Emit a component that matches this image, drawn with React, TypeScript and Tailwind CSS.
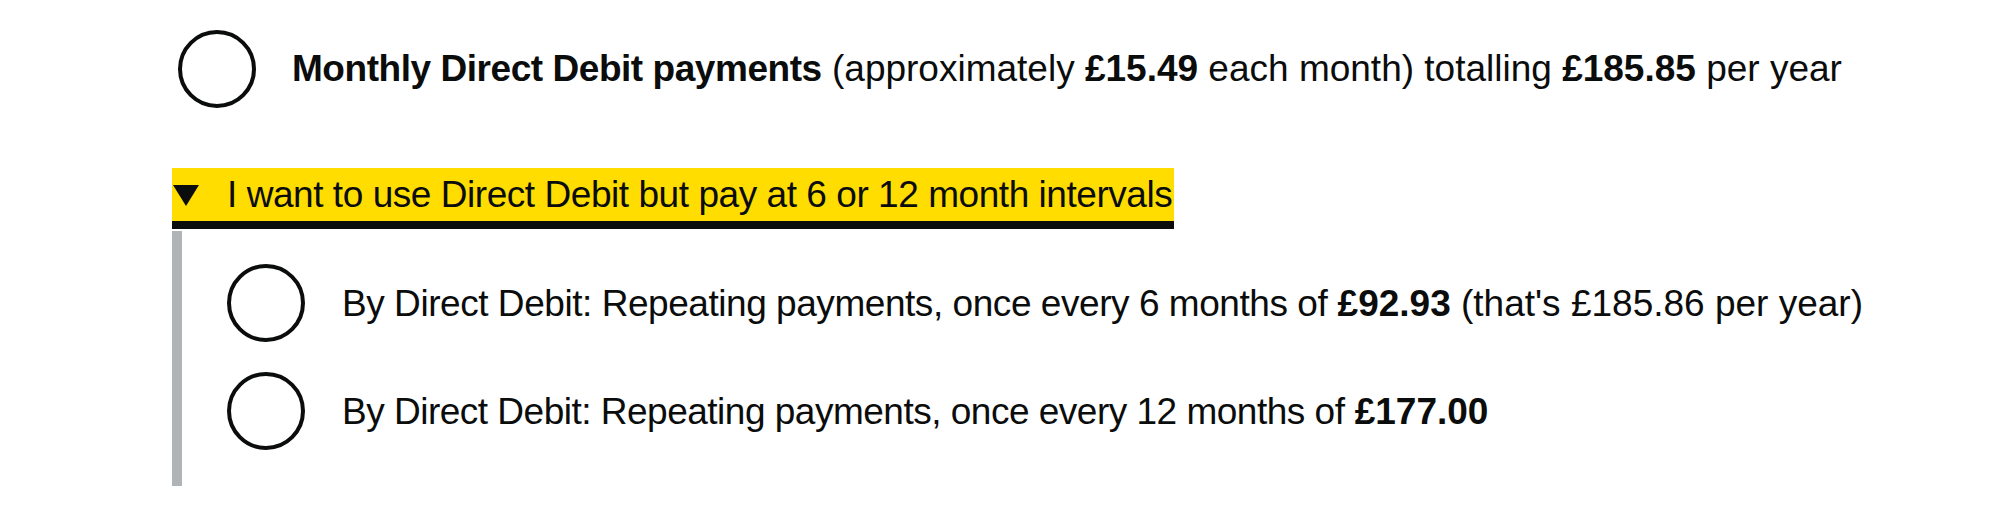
import React from "react";

function Radio() {
  return (
    <span className="block w-[78px] h-[78px] shrink-0 rounded-full border-[4px] border-[#0b0c0c] bg-white" />
  );
}

function Tight({ children }: { children: React.ReactNode }) {
  return <span className="tracking-[-0.45px]">{children}</span>;
}

export default function App() {
  return (
    <div
      className="w-full h-[531px] bg-white text-[#0b0c0c] pl-[172px] pt-[29px]"
      style={{ fontFamily: '"Liberation Sans", Arial, sans-serif' }}
    >
      {/* Monthly option */}
      <label className="flex items-center h-[79px] pl-[6px]">
        <Radio />
        <span className="ml-[36px] text-[37px] leading-[49px] whitespace-nowrap">
          <b className="tracking-[-0.45px]">Monthly Direct Debit payments</b> (approximately <b>£15.49</b> each
          month) totalling <b>£185.85</b> per year
        </span>
      </label>

      {/* Disclosure with the interval options */}
      <div className="mt-[60px]">
        <div className="inline-flex items-center h-[53px] bg-[#ffdd00] shadow-[0_8px_0_#0b0c0c] pr-[2px]">
          <svg width="26" height="21" viewBox="0 0 26 21" className="ml-[1px] mt-[2px]">
            <polygon points="0,0 26,0 13,21" fill="#0b0c0c" />
          </svg>
          <span className="ml-[28px] text-[37px] leading-[49px] whitespace-nowrap tracking-[-0.45px]">
            I want to use Direct Debit but pay at 6 or 12 month intervals
          </span>
        </div>
        <div className="mt-[10px] h-[255px] border-l-[10px] border-[#b1b4b6] pl-[45px] pt-[18px] flex flex-col">
          <label className="flex items-center h-[108px]">
            <Radio />
            <span className="ml-[37px] text-[37px] leading-[49px] whitespace-nowrap">
              <Tight>By Direct Debit: Repeating payments, once every 6 months of</Tight> <b>£92.93</b> (that's
              £185.86 per year)
            </span>
          </label>
          <label className="flex items-center h-[108px]">
            <Radio />
            <span className="ml-[37px] text-[37px] leading-[49px] whitespace-nowrap">
              <span className="tracking-[-0.5px]">By Direct Debit: Repeating payments, once every 12 months of</span>{" "}
              <b>£177.00</b>
            </span>
          </label>
        </div>
      </div>
    </div>
  );
}
